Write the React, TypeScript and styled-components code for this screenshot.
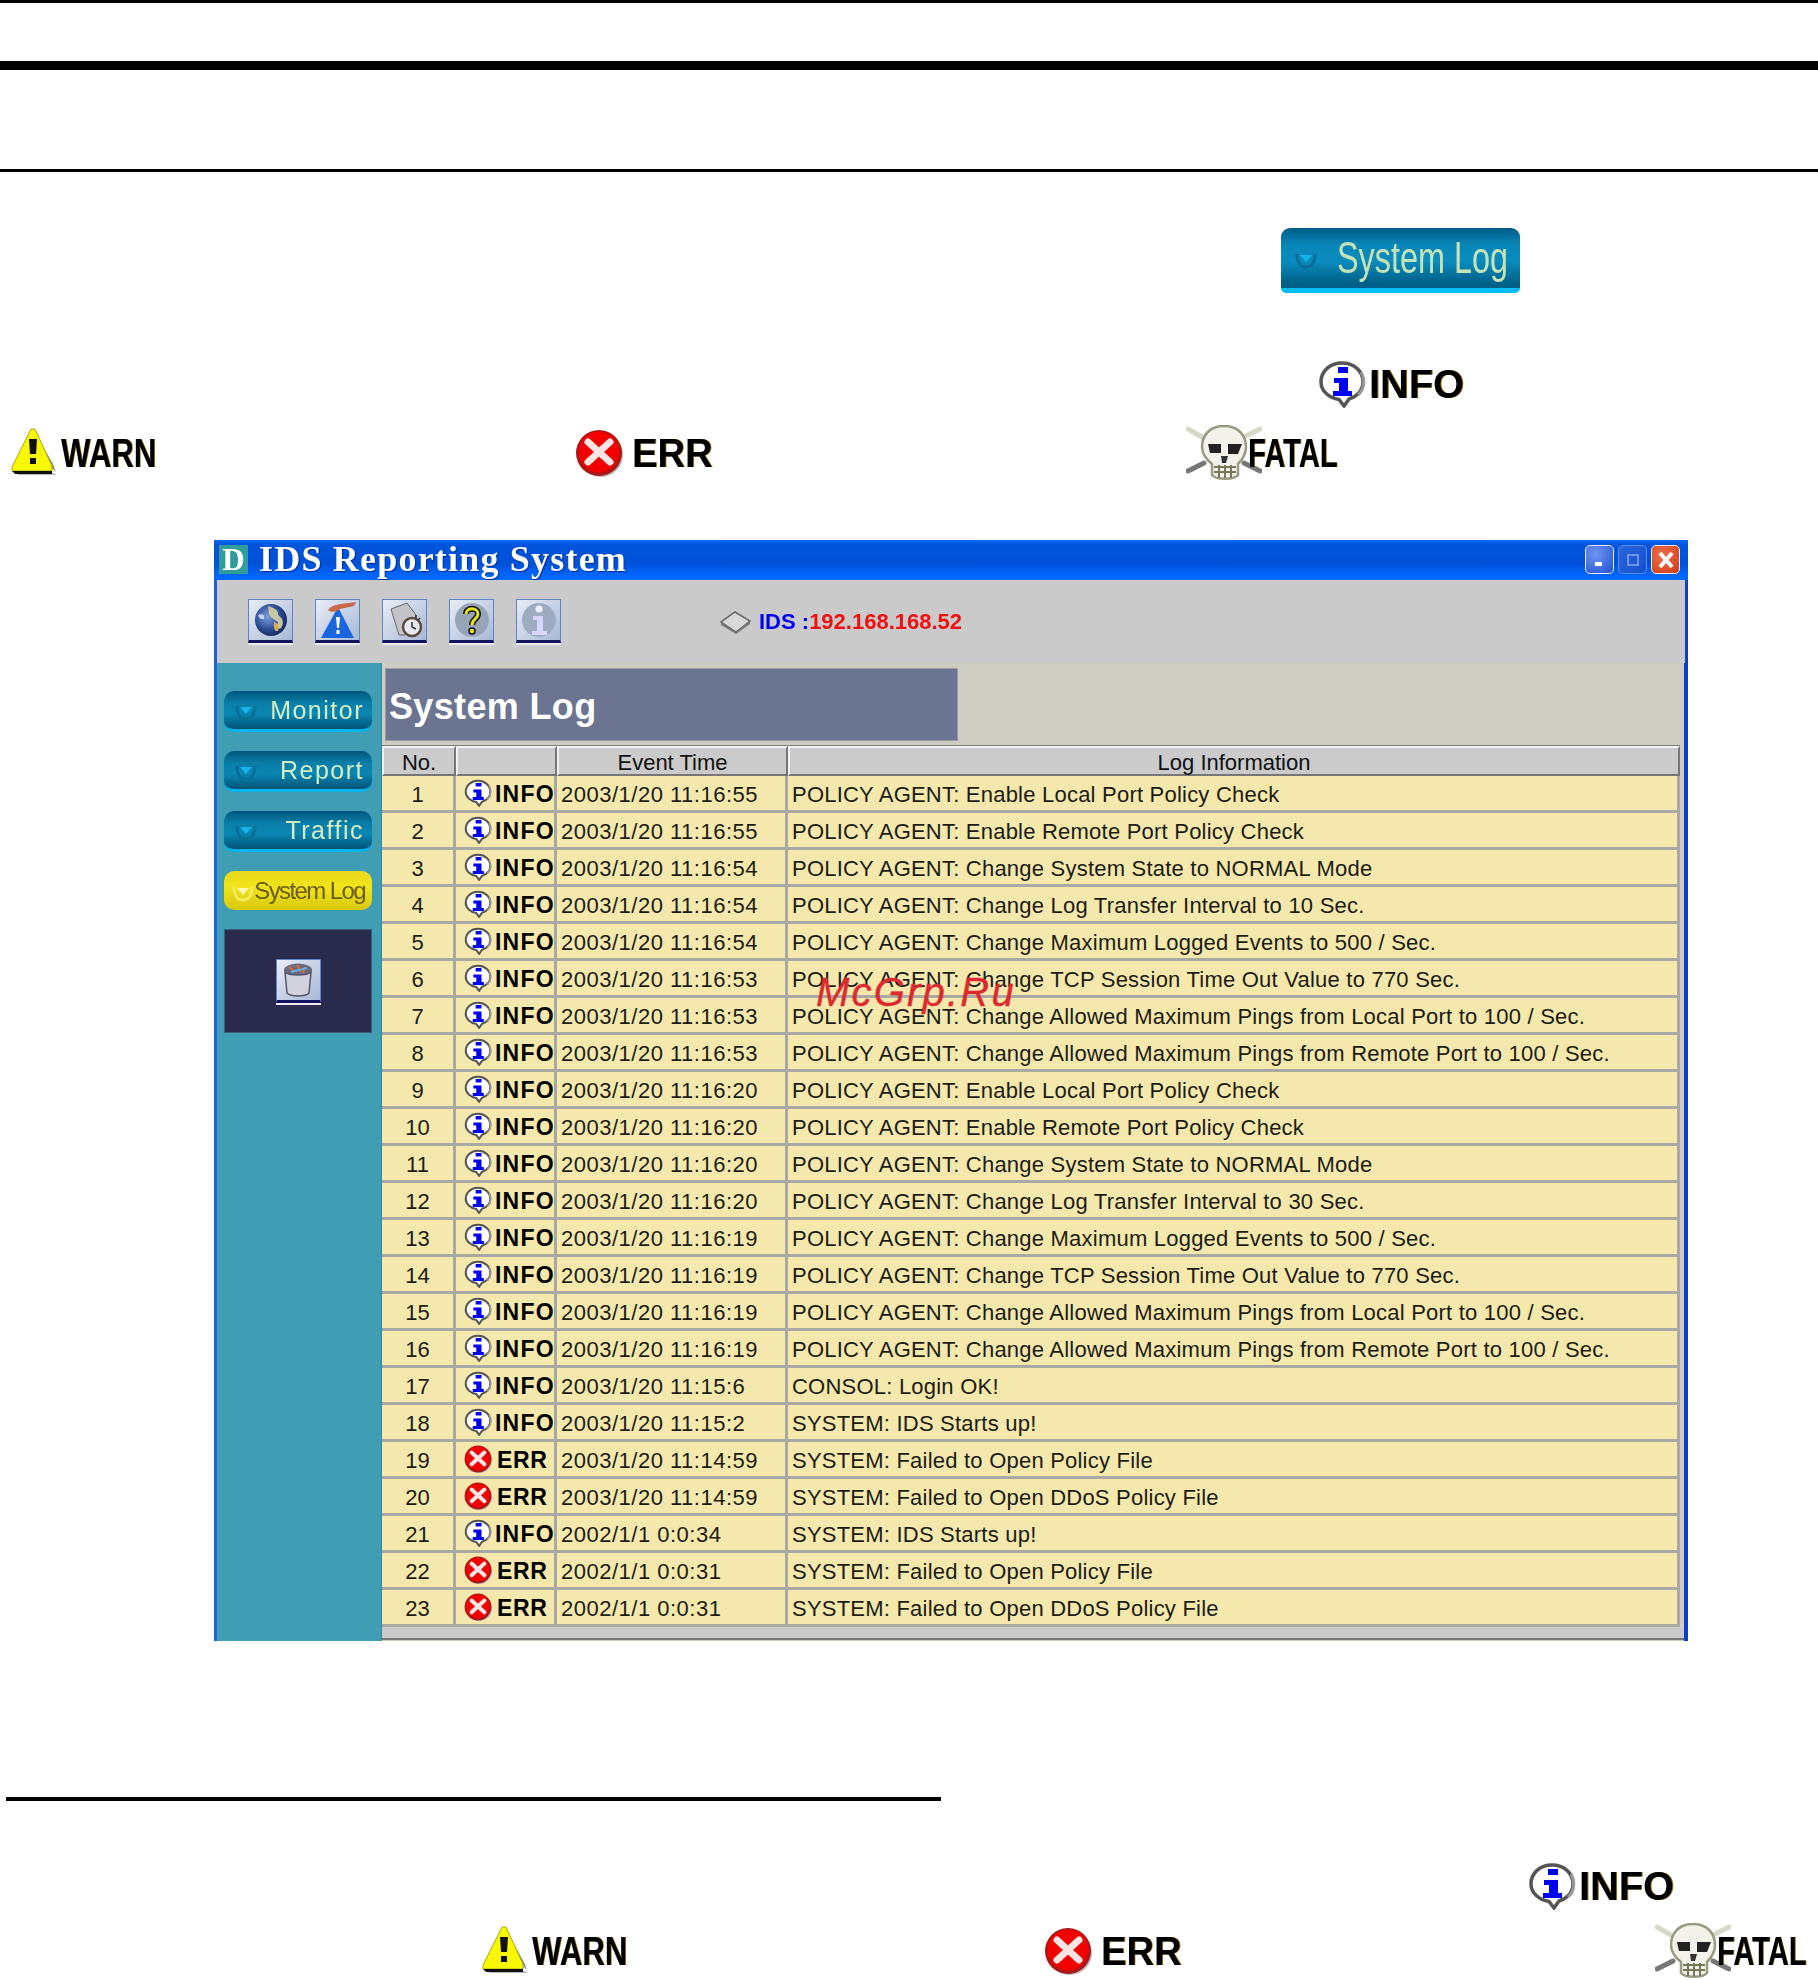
import React from 'react';
import styled, { createGlobalStyle } from 'styled-components';

type Level = 'INFO' | 'ERR';

interface ILogRow
{
    level : Level;
    time : string;
    text : string;
}

const CHECK_LOCAL = 'POLICY AGENT: Enable Local Port Policy Check';
const CHECK_REMOTE = 'POLICY AGENT: Enable Remote Port Policy Check';
const STATE = 'POLICY AGENT: Change System State to NORMAL Mode';
const MAX_EVENTS = 'POLICY AGENT: Change Maximum Logged Events to 500 / Sec.';
const TCP = 'POLICY AGENT: Change TCP Session Time Out Value to 770 Sec.';
const PING_LOCAL = 'POLICY AGENT: Change Allowed Maximum Pings from Local Port to 100 / Sec.';
const PING_REMOTE = 'POLICY AGENT: Change Allowed Maximum Pings from Remote Port to 100 / Sec.';
const NO_POLICY = 'SYSTEM: Failed to Open Policy File';
const NO_DDOS = 'SYSTEM: Failed to Open DDoS Policy File';
const STARTS = 'SYSTEM: IDS Starts up!';

const rows : ILogRow[] = [
    { level: 'INFO', time: '2003/1/20 11:16:55', text: CHECK_LOCAL },
    { level: 'INFO', time: '2003/1/20 11:16:55', text: CHECK_REMOTE },
    { level: 'INFO', time: '2003/1/20 11:16:54', text: STATE },
    { level: 'INFO', time: '2003/1/20 11:16:54', text: 'POLICY AGENT: Change Log Transfer Interval to 10 Sec.' },
    { level: 'INFO', time: '2003/1/20 11:16:54', text: MAX_EVENTS },
    { level: 'INFO', time: '2003/1/20 11:16:53', text: TCP },
    { level: 'INFO', time: '2003/1/20 11:16:53', text: PING_LOCAL },
    { level: 'INFO', time: '2003/1/20 11:16:53', text: PING_REMOTE },
    { level: 'INFO', time: '2003/1/20 11:16:20', text: CHECK_LOCAL },
    { level: 'INFO', time: '2003/1/20 11:16:20', text: CHECK_REMOTE },
    { level: 'INFO', time: '2003/1/20 11:16:20', text: STATE },
    { level: 'INFO', time: '2003/1/20 11:16:20', text: 'POLICY AGENT: Change Log Transfer Interval to 30 Sec.' },
    { level: 'INFO', time: '2003/1/20 11:16:19', text: MAX_EVENTS },
    { level: 'INFO', time: '2003/1/20 11:16:19', text: TCP },
    { level: 'INFO', time: '2003/1/20 11:16:19', text: PING_LOCAL },
    { level: 'INFO', time: '2003/1/20 11:16:19', text: PING_REMOTE },
    { level: 'INFO', time: '2003/1/20 11:15:6', text: 'CONSOL: Login OK!' },
    { level: 'INFO', time: '2003/1/20 11:15:2', text: STARTS },
    { level: 'ERR', time: '2003/1/20 11:14:59', text: NO_POLICY },
    { level: 'ERR', time: '2003/1/20 11:14:59', text: NO_DDOS },
    { level: 'INFO', time: '2002/1/1 0:0:34', text: STARTS },
    { level: 'ERR', time: '2002/1/1 0:0:31', text: NO_POLICY },
    { level: 'ERR', time: '2002/1/1 0:0:31', text: NO_DDOS },
];

const GlobalStyle = createGlobalStyle`
    html, body {
        margin: 0;
        padding: 0;
        background: #fff;
    }

    body {
        font-family: "Liberation Sans", Arial, sans-serif;
        color: #000;
    }
`;

const Page = styled.div`
    width: 1818px;
    height: 1980px;
    overflow: hidden;
    display: flex;
    flex-direction: column;
    align-items: flex-start;
`;

const Rule = styled.hr<{ $top : number; $height : number; $left? : number; $width? : number }>`
    border: none;
    flex: none;
    margin: ${p => p.$top}px 0 0 ${p => p.$left ?? 0}px;
    width: ${p => p.$width ?? 1818}px;
    height: ${p => p.$height}px;
    background: #000;
`;

const LogButton = styled.div`
    flex: none;
    margin: 56px 0 0 1281px;
    width: 239px;
    height: 65px;
    box-sizing: border-box;
    display: flex;
    align-items: center;
    padding-left: 14px;
    gap: 20px;
    border-radius: 9px 9px 5px 5px;
    border-bottom: 5px solid #00bdf5;
    background: linear-gradient(#005c86 0%, #0a86b8 28%, #0a8cbe 55%, #006088 92%);
    filter: blur(.5px);
`;

const LogButtonLabel = styled.span`
    display: inline-block;
    width: 172px;
    white-space: nowrap;
    font-size: 45px;
    line-height: 56px;
    color: #c5e2b6;
    transform: scaleX(.72);
    transform-origin: left center;
`;

const LegendRow = styled.div<{ $top : number; $left : number; $height : number }>`
    flex: none;
    margin: ${p => p.$top}px 0 0 ${p => p.$left}px;
    height: ${p => p.$height}px;
    display: flex;
    align-items: center;
`;

const LegendItem = styled.div<{ $width? : number }>`
    display: flex;
    align-items: center;
    flex: none;
    width: ${p => p.$width ? `${p.$width}px` : 'auto'};
    filter: blur(.55px);
`;

const LegendLabel = styled.span<{ $squeeze : number; $gap : number }>`
    display: inline-block;
    margin-left: ${p => p.$gap}px;
    font-size: 41px;
    line-height: 48px;
    font-weight: bold;
    white-space: nowrap;
    text-shadow: 1px 0 0 #8a6a10;
    transform: scaleX(${p => p.$squeeze});
    transform-origin: left center;
`;

const Window = styled.section`
    flex: none;
    position: relative;
    margin: 58px 0 0 214px;
    width: 1474px;
    height: 1101px;
    box-sizing: border-box;
    border-left: 3px solid #1a62e0;
    border-right: 4px solid #0a3fd0;
    display: flex;
    flex-direction: column;
    filter: blur(.45px);
`;

const TitleBar = styled.header`
    flex: none;
    height: 40px;
    margin: 0 -4px 0 -3px;
    padding: 5px 8px 0 5px;
    box-sizing: border-box;
    display: flex;
    align-items: flex-start;
    background: linear-gradient(#0a6af0 0%, #0054dc 12%, #0050d8 60%, #0064fa 85%, #0068ff 100%);
`;

const Logo = styled.span`
    flex: none;
    width: 29px;
    height: 29px;
    margin-right: 11px;
    display: flex;
    align-items: center;
    justify-content: center;
    background: #2f9d9a;
    color: #fff;
    font-family: "Liberation Serif", serif;
    font-weight: bold;
    font-size: 31px;
    line-height: 29px;
`;

const TitleText = styled.h1`
    flex: 1;
    margin: 0;
    color: #fff;
    font-family: "Liberation Serif", serif;
    font-weight: bold;
    font-size: 36px;
    line-height: 28px;
    letter-spacing: 1.2px;
    white-space: pre;
    text-shadow: 1px 1px 1px #00308f;
`;

const WindowButton = styled.span<{ $kind : 'min' | 'max' | 'close' }>`
    flex: none;
    width: 29px;
    height: 29px;
    margin-left: 4px;
    box-sizing: border-box;
    display: flex;
    align-items: center;
    justify-content: center;
    border-radius: 5px;
    border: 1px solid ${p => p.$kind === 'max' ? '#5c8df0' : '#e8eefc'};
    background: ${p =>
        p.$kind === 'close' ? 'radial-gradient(circle at 40% 35%, #ee7050, #cf3d14)' :
        p.$kind === 'max' ? 'linear-gradient(135deg, #2a66dc, #1450cc)' :
        'radial-gradient(circle at 35% 30%, #6f96f0, #2050d8)'};
`;

const Toolbar = styled.div`
    flex: none;
    height: 83px;
    margin-right: -1px;
    padding: 19px 0 0 31px;
    box-sizing: border-box;
    display: flex;
    align-items: flex-start;
    background: #cacaca;
`;

const ToolButton = styled.span`
    flex: none;
    width: 45px;
    height: 44px;
    margin-right: 22px;
    box-sizing: border-box;
    display: flex;
    align-items: center;
    justify-content: center;
    border: 1px solid #5c84c8;
    border-bottom: 3px solid #12125c;
    box-shadow: 0 2px 0 #ececf0;
    background: linear-gradient(135deg, #e8edf6, #a9b8d6);
`;

const PanelButton = styled(ToolButton)`
    margin-right: 0;
`;

const ServerInfo = styled.div`
    display: flex;
    align-items: center;
    margin: 10px 0 0 136px;
    height: 25px;
    white-space: pre;
    font-size: 22px;
    font-weight: bold;
`;

const ServerName = styled.span`
    color: #0000f0;
    margin-left: 7px;
`;

const ServerAddress = styled.span`
    color: #f01010;
`;

const WindowBody = styled.div`
    flex: 1;
    min-height: 0;
    display: flex;
`;

const Sidebar = styled.nav`
    flex: none;
    width: 165px;
    padding: 28px 9px 0 7px;
    box-sizing: border-box;
    display: flex;
    flex-direction: column;
    gap: 19px;
    background: #3f9db4;
    border-right: 1px solid #3a8496;
`;

const NavButton = styled.div<{ $active? : boolean }>`
    height: ${p => p.$active ? 39 : 41}px;
    box-sizing: border-box;
    display: flex;
    align-items: center;
    justify-content: space-between;
    padding: 0 ${p => p.$active ? 7 : 8}px 0 ${p => p.$active ? 8 : 11}px;
    border-radius: 10px;
    white-space: nowrap;
    color: ${p => p.$active ? '#6a5e12' : '#d5ecc0'};
    font-size: ${p => p.$active ? 24 : 25}px;
    letter-spacing: ${p => p.$active ? -1.6 : 1.5}px;
    border-bottom: ${p => p.$active ? 'none' : '3px solid #00b4ee'};
    background: ${p => p.$active
        ? 'linear-gradient(#e8d81c 0%, #f2e41a 40%, #d8c80e 100%)'
        : 'linear-gradient(#00567c 0%, #0a7ea8 32%, #0b86b2 60%, #005478 100%)'};
`;

const ToolPanel = styled.div`
    height: 104px;
    display: flex;
    align-items: center;
    justify-content: center;
    background: #2a2a4c;
    border: 1px solid #3f5f80;
    box-sizing: border-box;
`;

const Content = styled.main`
    flex: 1;
    min-width: 0;
    display: flex;
    flex-direction: column;
    background: #cdcdc4;
`;

const Banner = styled.h2`
    flex: none;
    width: 573px;
    height: 73px;
    margin: 5px 0 0 3px;
    padding: 4px 0 0 3px;
    box-sizing: border-box;
    display: flex;
    align-items: center;
    background: #6b7591;
    border: 1px solid #9a9aa0;
    color: #fff;
    font-size: 36px;
    font-weight: bold;
    letter-spacing: .35px;
`;

const LogTable = styled.div`
    flex: none;
    width: 1298px;
    margin-top: 4px;
    border-top: 1px solid #7c7c7c;
    display: grid;
    grid-template-columns: 74px 101px 231px 892px;
    grid-template-rows: 30px;
    grid-auto-rows: 37px;
    font-size: 22px;
`;

const HeaderCell = styled.div`
    box-sizing: border-box;
    display: flex;
    align-items: flex-end;
    justify-content: center;
    line-height: 22px;
    color: #111;
    background: #cbcbcb;
    border-top: 2px solid #f2f2f2;
    border-left: 2px solid #f2f2f2;
    border-right: 2px solid #777;
    border-bottom: 2px solid #777;
`;

const Cell = styled.div<{ $center? : boolean; $spacing? : number }>`
    box-sizing: border-box;
    display: flex;
    align-items: center;
    justify-content: ${p => p.$center ? 'center' : 'flex-start'};
    padding: 3px 0 0 ${p => p.$center ? 0 : 4}px;
    letter-spacing: ${p => p.$spacing ?? 0}px;
    white-space: nowrap;
    color: #1c1c14;
    background: #f4e8ad;
    border-right: 3px solid #a9a9a4;
    border-bottom: 3px solid #a9a9a4;
`;

const LevelCell = styled(Cell)`
    padding: 0 0 0 8px;
`;

const LevelText = styled.span<{ $level : Level }>`
    margin: 2px 0 0 ${p => p.$level === 'ERR' ? 5 : 3}px;
    font-size: 23px;
    font-weight: bold;
    letter-spacing: ${p => p.$level === 'INFO' ? 1.2 : 0.6}px;
    color: #000;
`;

const BottomStrip = styled.div`
    flex: none;
    height: 13px;
    box-sizing: border-box;
    background: #cacaca;
    border-bottom: 2px solid #777;
`;

const Watermark = styled.div`
    position: absolute;
    left: 599px;
    top: 428px;
    color: #dc2a2e;
    font-family: "Liberation Sans", sans-serif;
    font-style: italic;
    font-size: 40px;
    line-height: 48px;
    letter-spacing: 2.2px;
    white-space: nowrap;
    -webkit-text-stroke: .4px #dc2a2e;
`;

function InfoIcon({ size } : { size : number })
{
    return (
        <svg width={size} height={size} viewBox="0 0 48 48" style={{ flex: 'none' }}>
            <path d="M24 3C36 3 45 11 45 22C45 31 38 37 31 39L26 46L21 39.500C11 38 3 31 3 22C3 11 12 3 24 3Z" fill="#fff" stroke="#555" strokeWidth="3.500" />
            <path d="M20 7H30V13H20ZM16 18H30V31H34V36H15V31H21V23H16Z" fill="#0000f0" />
            <path d="M43 12C47 19 47 29 40 35" fill="none" stroke="#999" strokeWidth="3" />
        </svg>
    );
}

function ErrIcon({ size } : { size : number })
{
    return (
        <svg width={size} height={size} viewBox="0 0 48 48" style={{ flex: 'none' }}>
            <circle cx="26" cy="26" r="22" fill="#bbb" />
            <circle cx="24" cy="24" r="23" fill="#a81818" />
            <circle cx="24" cy="23" r="20.500" fill="#f20000" />
            <path d="M13 13L35 33M35 13L13 33" stroke="#fbe4e4" strokeWidth="7" strokeLinecap="round" />
        </svg>
    );
}

function WarnIcon()
{
    return (
        <svg width={50} height={51} viewBox="0 0 50 51" style={{ flex: 'none' }}>
            <path d="M8 47H47L41 44H8Z" fill="#b8b8b8" />
            <path d="M23 1L43 36L46 44L42 40L25 8Z" fill="#888" />
            <path d="M21 1H25L42 38V43H2V39Z" fill="#f8f800" stroke="#a8a820" strokeWidth="1" />
            <path d="M2 43H42V46H5Z" fill="#111" />
            <path d="M19 11H27L26 26H20ZM20 30H26V36H20Z" fill="#111" />
        </svg>
    );
}

function SkullIcon()
{
    return (
        <svg width={76} height={57} viewBox="0 0 76 57" style={{ flex: 'none' }}>
            <path d="M2 4L16 12M74 4L58 12" stroke="#d8d8c8" strokeWidth="5" strokeLinecap="round" />
            <path d="M2 46L18 38M74 46L58 38" stroke="#777" strokeWidth="5" strokeLinecap="round" />
            <path d="M38 1C52 1 60 10 60 22C60 30 55 36 52 39V50C48 55 30 55 26 50V39C21 35 16 30 16 22C16 10 24 1 38 1Z" fill="#f2f2ea" stroke="#9a9a80" strokeWidth="2.500" />
            <path d="M22 19H35V28H24ZM42 19H56L52 29H42Z" fill="#222" />
            <path d="M35 31H42L40 38H36Z" fill="#333" />
            <path d="M28 42H50M28 47H50M33 40V53M39 40V53M45 40V53" stroke="#77775a" strokeWidth="2" />
        </svg>
    );
}

function Chevron({ active } : { active? : boolean })
{
    const ring = active ? '#f4ea5a' : '#0a6e98';
    const fill = active ? '#fff8b0' : '#14b4e8';

    return (
        <svg width={22} height={24} viewBox="0 0 22 24" style={{ flex: 'none' }}>
            <path d="M2 8C2 17 6 21 11 21C16 21 20 17 20 8" fill="none" stroke={ring} strokeWidth="3" />
            <path d="M5 9H17L11 16Z" fill={fill} />
        </svg>
    );
}

function GlobeIcon()
{
    return (
        <svg width={34} height={34} viewBox="0 0 34 34">
            <defs>
                <radialGradient id="sea" cx=".4" cy=".4" r=".7">
                    <stop offset="0" stopColor="#7b9ee0" />
                    <stop offset=".6" stopColor="#2a4a90" />
                    <stop offset="1" stopColor="#0e1f50" />
                </radialGradient>
            </defs>
            <circle cx="17" cy="17" r="16" fill="url(#sea)" />
            <path d="M14 3C20 5 25 7 24 12C28 15 31 19 27 25C24 27 23 23 24 19C21 17 17 15 15 11Z" fill="#c8c8a0" />
            <path d="M20 19C24 20 26 23 24 28C21 29 19 25 20 19Z" fill="#d8b050" />
            <path d="M4 12C8 10 11 12 10 16C8 17 5 16 4 12Z" fill="#c6d6f0" />
        </svg>
    );
}

function RoadIcon()
{
    return (
        <svg width={40} height={38} viewBox="0 0 40 38">
            <path d="M20 6L36 37H3Z" fill="#1a66e0" />
            <path d="M18 16H22L21 27H19ZM18.500 29H21.500V33H18.500Z" fill="#fff" />
            <path d="M10 9C14 3 24 3 38 1L36 5L22 8C18 11 13 12 10 9Z" fill="#c86a48" />
        </svg>
    );
}

function WatchIcon()
{
    return (
        <svg width={40} height={38} viewBox="0 0 40 38">
            <path d="M6 8L22 2L31 14L28 24L20 34H14Z" fill="#c4c4c8" stroke="#666" strokeWidth="1" />
            <circle cx="27" cy="26" r="9" fill="#e8e8f0" stroke="#5a4a3a" strokeWidth="2.500" />
            <path d="M27 21V26L31 28M31 14V17M35 17L33 19" stroke="#333" strokeWidth="1.500" fill="none" />
        </svg>
    );
}

function HelpIcon()
{
    const d = 'M13 13C13 6 25 6 25 13C25 18 19 18 19 24';

    return (
        <svg width={38} height={38} viewBox="0 0 38 38">
            <circle cx="19" cy="19" r="17" fill="#96a4b8" />
            <path d={d} fill="none" stroke="#111" strokeWidth="6" />
            <circle cx="19" cy="30" r="3" fill="#e6e61c" stroke="#111" strokeWidth="1.500" />
            <path d={d} fill="none" stroke="#e6e61c" strokeWidth="3" />
        </svg>
    );
}

function AboutIcon()
{
    return (
        <svg width={38} height={38} viewBox="0 0 38 38">
            <circle cx="19" cy="19" r="17" fill="#9dacc0" />
            <circle cx="19" cy="8" r="3.500" fill="#f0f0ff" />
            <path d="M13 15H23V30H27V34H12V30H17V19H13Z" fill="#d8d4fa" />
        </svg>
    );
}

function TrashIcon()
{
    return (
        <svg width={34} height={36} viewBox="0 0 34 36">
            <ellipse cx="17" cy="8" rx="14" ry="6.500" fill="#6a6a80" />
            <path d="M8 5L14 10M16 3L20 10M24 5L22 11" stroke="#e86a30" strokeWidth="2" />
            <path d="M10 10L26 6" stroke="#5ab0e0" strokeWidth="2" />
            <path d="M4 10C8 14 26 14 30 10L28 31C24 35 10 35 6 31Z" fill="#d2d2dc" stroke="#56566a" strokeWidth="1.500" />
        </svg>
    );
}

const App = () => {
    return (
        <Page>
            <GlobalStyle />

            <Rule $top={0} $height={3} />
            <Rule $top={58} $height={9} />
            <Rule $top={99} $height={3} />

            <LogButton>
                <Chevron />
                <LogButtonLabel>System Log</LogButtonLabel>
            </LogButton>

            <LegendRow $top={67} $left={1318} $height={48}>
                <LegendItem>
                    <InfoIcon size={48} />
                    <LegendLabel $squeeze={.97} $gap={3}>INFO</LegendLabel>
                </LegendItem>
            </LegendRow>

            <LegendRow $top={16} $left={10} $height={58}>
                <LegendItem $width={565}>
                    <WarnIcon />
                    <LegendLabel $squeeze={.76} $gap={1}>WARN</LegendLabel>
                </LegendItem>
                <LegendItem $width={611}>
                    <ErrIcon size={48} />
                    <LegendLabel $squeeze={.93} $gap={9}>ERR</LegendLabel>
                </LegendItem>
                <LegendItem>
                    <SkullIcon />
                    <LegendLabel $squeeze={.71} $gap={-14}>FATAL</LegendLabel>
                </LegendItem>
            </LegendRow>

            <Window>
                <TitleBar>
                    <Logo>D</Logo>
                    <TitleText>IDS Reporting System</TitleText>
                    <WindowButton $kind="min">
                        <svg width={14} height={14} viewBox="0 0 14 14"><path d="M2 9H9V13H2Z" fill="#fff" /></svg>
                    </WindowButton>
                    <WindowButton $kind="max">
                        <svg width={14} height={14} viewBox="0 0 14 14"><path d="M2 2H12V12H2Z" fill="none" stroke="#6e96e8" strokeWidth="2" /></svg>
                    </WindowButton>
                    <WindowButton $kind="close">
                        <svg width={18} height={20} viewBox="0 0 18 20"><path d="M3 3L15 17M15 3L3 17" stroke="#fff" strokeWidth="4" /></svg>
                    </WindowButton>
                </TitleBar>

                <Toolbar>
                    <ToolButton><GlobeIcon /></ToolButton>
                    <ToolButton><RoadIcon /></ToolButton>
                    <ToolButton><WatchIcon /></ToolButton>
                    <ToolButton><HelpIcon /></ToolButton>
                    <ToolButton><AboutIcon /></ToolButton>
                    <ServerInfo>
                        <svg width={33} height={24} viewBox="0 0 33 24">
                            <path d="M16 2L31 11L17 22L2 12Z" fill="#d8d8d8" stroke="#666" strokeWidth="1.500" />
                            <path d="M2 12L17 22L31 11V14L17 24L2 15Z" fill="#777" />
                        </svg>
                        <ServerName>IDS :</ServerName>
                        <ServerAddress>192.168.168.52</ServerAddress>
                    </ServerInfo>
                </Toolbar>

                <WindowBody>
                    <Sidebar>
                        <NavButton><Chevron /><span>Monitor</span></NavButton>
                        <NavButton><Chevron /><span>Report</span></NavButton>
                        <NavButton><Chevron /><span>Traffic</span></NavButton>
                        <NavButton $active><Chevron active /><span>System Log</span></NavButton>
                        <ToolPanel>
                            <PanelButton><TrashIcon /></PanelButton>
                        </ToolPanel>
                    </Sidebar>

                    <Content>
                        <Banner>System Log</Banner>
                        <LogTable>
                            <HeaderCell>No.</HeaderCell>
                            <HeaderCell />
                            <HeaderCell>Event Time</HeaderCell>
                            <HeaderCell>Log Information</HeaderCell>
                            {rows.map((row, index) => (
                                <React.Fragment key={index}>
                                    <Cell $center>{index + 1}</Cell>
                                    <LevelCell>
                                        {row.level === 'INFO' ? <InfoIcon size={28} /> : <ErrIcon size={28} />}
                                        <LevelText $level={row.level}>{row.level}</LevelText>
                                    </LevelCell>
                                    <Cell $spacing={.5}>{row.time}</Cell>
                                    <Cell $spacing={.22}>{row.text}</Cell>
                                </React.Fragment>
                            ))}
                        </LogTable>
                        <BottomStrip />
                    </Content>
                </WindowBody>

                <Watermark>McGrp.Ru</Watermark>
            </Window>

            <Rule $top={156} $height={4} $left={6} $width={935} />

            <LegendRow $top={61} $left={1528} $height={48}>
                <LegendItem>
                    <InfoIcon size={48} />
                    <LegendLabel $squeeze={.97} $gap={3}>INFO</LegendLabel>
                </LegendItem>
            </LegendRow>

            <LegendRow $top={12} $left={481} $height={58}>
                <LegendItem $width={563}>
                    <WarnIcon />
                    <LegendLabel $squeeze={.76} $gap={1}>WARN</LegendLabel>
                </LegendItem>
                <LegendItem $width={611}>
                    <ErrIcon size={48} />
                    <LegendLabel $squeeze={.93} $gap={9}>ERR</LegendLabel>
                </LegendItem>
                <LegendItem>
                    <SkullIcon />
                    <LegendLabel $squeeze={.71} $gap={-14}>FATAL</LegendLabel>
                </LegendItem>
            </LegendRow>
        </Page>
    );
};

export default App;
